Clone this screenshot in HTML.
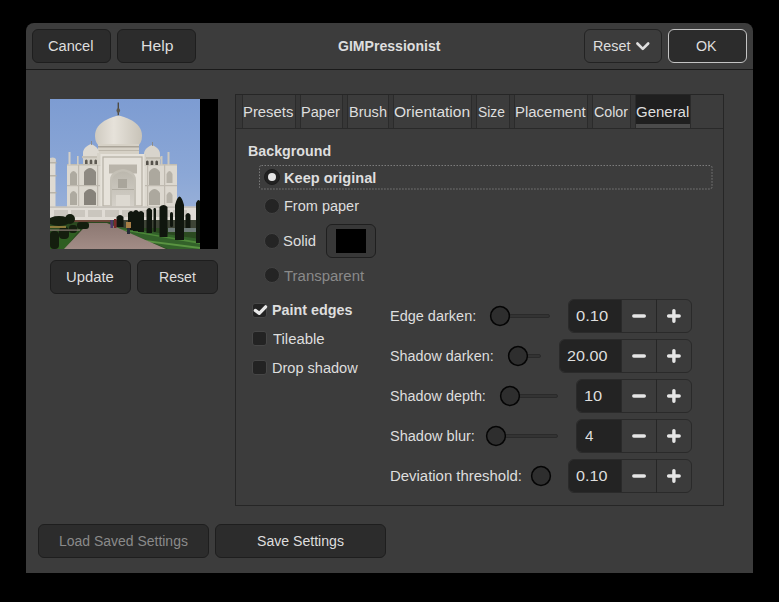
<!DOCTYPE html>
<html><head><meta charset="utf-8">
<style>
*{box-sizing:border-box;margin:0;padding:0}
html,body{width:779px;height:602px;background:#000;overflow:hidden}
body{position:relative;font-family:"Liberation Sans",sans-serif;font-size:15.5px;color:#dedede}
.a{position:absolute}
.win{left:26px;top:23px;width:727px;height:550px;background:#3c3c3c;border-radius:8px 8px 0 0}
.hline{left:26px;top:69px;width:727px;height:1px;background:#1a1a1a}
.t{position:absolute;line-height:20px;white-space:nowrap;transform-origin:0 0}
.b{font-weight:bold}
.btn{position:absolute;background:#2c2c2c;border:1px solid #1e1e1e;border-radius:6px}
.dis{color:#8a8a8a}
.nb{left:235px;top:94px;width:489px;height:412px;border:1px solid #262626}
.tstrip{left:236px;top:95px;width:487px;height:34px;background:#373737}
.tab{position:absolute;top:95px;height:33px;background:#3c3c3c;border-left:1px solid #2b2b2b;border-right:1px solid #2b2b2b}
.radio{position:absolute;width:16px;height:16px;border-radius:50%;background:#242424;border:1px solid #434343}
.chk{position:absolute;width:15px;height:15px;border-radius:3px;background:#232323;border:1px solid #464646}
.knob{position:absolute;width:20px;height:20px;border-radius:50%;background:#2e2e2e;border:1.5px solid #141414}
.track{position:absolute;height:4px;border-radius:2px;background:#333;border:1px solid #2a2a2a}
.spin{position:absolute;height:34px;background:#3b3b3b;border:1px solid #2a2a2a;border-radius:6px;overflow:hidden}
.entry{position:absolute;left:0;top:0;bottom:0;background:#232323;border-right:1px solid #2a2a2a}
.sep{position:absolute;top:0;bottom:0;width:1px;background:#262626}
</style></head><body>
<div class="a win"></div>
<div class="a hline"></div>

<!-- header buttons -->
<div class="btn" style="left:32px;top:29px;width:79px;height:34px"></div>
<div class="t" style="transform:scaleX(0.943);left:48.3px;top:36px">Cancel</div>
<div class="btn" style="left:117px;top:29px;width:79px;height:34px"></div>
<div class="t" style="transform:scaleX(1.017);left:140.5px;top:36px">Help</div>
<div class="t b" style="transform:scaleX(0.908);left:338.1px;top:36px">GIMPressionist</div>
<div class="btn" style="left:584px;top:29px;width:78px;height:34px;background:#3c3c3c;border-color:#232323"></div>
<div class="t" style="transform:scaleX(0.924);left:593.2px;top:36px">Reset</div>
<svg class="a" style="left:634px;top:39px" width="18" height="14" viewBox="0 0 18 14"><polyline points="3.4,4.5 8.8,9.9 14.2,4.5" fill="none" stroke="#dedede" stroke-width="2.6" stroke-linecap="round" stroke-linejoin="round"/></svg>
<div class="btn" style="left:668px;top:29px;width:79px;height:34px;border-color:#c4c4c4"></div>
<div class="t" style="transform:scaleX(0.920);left:696.3px;top:36px">OK</div>

<!-- preview -->
<div class="a" style="left:50px;top:99px;width:168px;height:150px;background:#000"></div>
<svg class="a" style="left:50px;top:99px" width="150" height="150" viewBox="0 0 150 150"><defs>
<linearGradient id="sky" x1="0" y1="0" x2="0" y2="1">
<stop offset="0" stop-color="#7d9cd2"/><stop offset="0.5" stop-color="#8ba7d6"/><stop offset="0.75" stop-color="#98b0d8"/><stop offset="1" stop-color="#a6b8da"/>
</linearGradient>
<linearGradient id="dome" x1="0" y1="0" x2="1" y2="0">
<stop offset="0" stop-color="#cfcac0"/><stop offset="0.4" stop-color="#e6e2da"/><stop offset="1" stop-color="#c8c3b8"/>
</linearGradient>
<linearGradient id="arch" x1="0" y1="0" x2="0" y2="1"><stop offset="0" stop-color="#bcb8ae"/><stop offset="1" stop-color="#d4d0c8"/></linearGradient>
<linearGradient id="path" x1="0" y1="0" x2="0" y2="1">
<stop offset="0" stop-color="#8c7872"/><stop offset="1" stop-color="#a28c86"/>
</linearGradient>
</defs>
<rect width="150" height="150" fill="url(#sky)"/>
<!-- left minaret -->
<rect x="0" y="62" width="5.5" height="46" fill="#dedad2"/>
<ellipse cx="2.5" cy="61" rx="3.5" ry="2.5" fill="#d4d0c8"/>
<rect x="0" y="63" width="6.5" height="1.5" fill="#b8b3a8"/>
<rect x="0" y="76" width="6.5" height="1.5" fill="#b8b3a8"/>
<rect x="0" y="93" width="6.5" height="1.5" fill="#b8b3a8"/>
<!-- spire -->
<rect x="67.6" y="3.5" width="1.4" height="13" fill="#4e4a40"/>
<ellipse cx="68.3" cy="11.5" rx="1.8" ry="2.2" fill="#5e584c"/>
<!-- main dome -->
<path d="M68.4 16.5 C64 17.5 45 22 45 37 C45 42 47 45 49 47 L88 47 C90 45 92 42 92 37 C92 22 73 17.5 68.4 16.5 Z" fill="url(#dome)"/>
<rect x="48" y="45" width="41" height="11" fill="#d6d1c6"/>
<rect x="48" y="47" width="41" height="1.5" fill="#aaa498"/>
<rect x="48" y="51" width="41" height="1" fill="#bdb7ab"/>
<!-- wings -->
<rect x="17" y="65" width="110" height="43" fill="#dcd8cf"/>
<rect x="17" y="65" width="110" height="1.5" fill="#c2bdb2"/>
<!-- chattris -->
<path d="M41 45 C36 47 33 50 33 54 L33 57 L49 57 L49 54 C49 50 46 47 41 45 Z" fill="#dedad2"/>
<rect x="41" y="42" width="0.8" height="4" fill="#8a857a"/>
<rect x="32" y="57" width="18" height="2.2" fill="#c6c1b6"/>
<rect x="33" y="59" width="16" height="6" fill="#d4d0c6"/>
<path d="M35 65 v-3.5 q1.3 -1.8 2.6 0 v3.5 Z M39.7 65 v-3.5 q1.3 -1.8 2.6 0 v3.5 Z M44.4 65 v-3.5 q1.3 -1.8 2.6 0 v3.5 Z" fill="#5e5a52"/>
<path d="M102 46 C97 48 94 51 94 55 L94 58 L110 58 L110 55 C110 51 107 48 102 46 Z" fill="#d8d4cc"/>
<rect x="102" y="43" width="0.8" height="4" fill="#8a857a"/>
<rect x="93" y="58" width="18" height="2.2" fill="#c2bdb2"/>
<rect x="94" y="60" width="16" height="6" fill="#d0ccc2"/>
<path d="M96 66 v-3.5 q1.3 -1.8 2.6 0 v3.5 Z M100.7 66 v-3.5 q1.3 -1.8 2.6 0 v3.5 Z M105.4 66 v-3.5 q1.3 -1.8 2.6 0 v3.5 Z" fill="#55514a"/>
<!-- pinnacles -->
<rect x="18.5" y="53" width="2" height="13" fill="#d4d0c8"/>
<rect x="117.5" y="53" width="2" height="13" fill="#ccc8be"/>
<rect x="110.5" y="57" width="2" height="9" fill="#ccc8be"/>
<rect x="27" y="57" width="1.6" height="9" fill="#d0ccc2"/>
<rect x="47" y="54" width="5" height="12" fill="#d6d2c8"/><rect x="93" y="55" width="3" height="11" fill="#d2cec4"/>
<!-- center pishtaq -->
<rect x="50.5" y="55" width="44" height="53" fill="#e6e2da"/>
<rect x="53" y="58" width="39" height="49" fill="none" stroke="#b4afa4" stroke-width="1.2"/>
<rect x="59" y="65.5" width="28" height="9" fill="#b9b4aa"/>
<path d="M60 107 L60 81 C60 74 66 71 73 70 C80 71 86 74 86 81 L86 107 Z" fill="#c4c0b6"/>
<path d="M62 107 L62 82 C62 76 67.5 73 73 72.5 C78.5 73 84 76 84 82 L84 107 Z" fill="url(#arch)"/>
<rect x="68" y="80" width="9" height="9" fill="#a9a59b"/>
<rect x="62" y="90" width="22" height="1" fill="#b0aca2"/>
<rect x="66" y="96" width="14" height="11" fill="#ddd9d1"/>
<!-- wing pillars/lines -->
<rect x="28" y="66" width="1.2" height="41" fill="#bfbab0"/>
<rect x="47" y="66" width="1.2" height="41" fill="#bfbab0"/>
<rect x="97" y="66" width="1.2" height="41" fill="#bfbab0"/>
<rect x="114" y="66" width="1.2" height="41" fill="#bfbab0"/>
<rect x="17" y="86" width="33" height="1.2" fill="#bfbab0"/>
<rect x="95" y="86" width="32" height="1.2" fill="#bfbab0"/>
<!-- niches left -->
<path d="M34 86 L34 73 Q40 65 46 73 L46 86 Z" fill="#8e8a82"/>
<path d="M34 106 L34 94 Q40 86 46 94 L46 106 Z" fill="#86827a"/>
<path d="M20 86 L20 75 Q23.5 69 27 75 L27 86 Z" fill="#aeaaa0"/>
<path d="M20 106 L20 95 Q23.5 89 27 95 L27 106 Z" fill="#aeaaa0"/>
<!-- niches right -->
<path d="M99 86 L99 73 Q104.5 65 110 73 L110 86 Z" fill="#aca89e"/>
<path d="M99 106 L99 94 Q104.5 86 110 94 L110 106 Z" fill="#aca89e"/>
<path d="M116.5 84 L116.5 75 Q119.5 69 122.5 75 L122.5 84 Z" fill="#b6b2a8"/>
<path d="M116.5 104 L116.5 96 Q119.5 90 122.5 96 L122.5 104 Z" fill="#b6b2a8"/>
<!-- plinth -->
<rect x="0" y="107.5" width="148" height="13.5" fill="#e0dcd5"/>
<rect x="0" y="107.5" width="148" height="1.2" fill="#bcb8b0"/>
<g fill="#cac6be">
<rect x="4" y="111" width="14" height="7"/><rect x="21" y="111" width="14" height="7"/><rect x="38" y="111" width="14" height="7"/><rect x="55" y="111" width="14" height="7"/><rect x="72" y="111" width="14" height="7"/><rect x="89" y="111" width="14" height="7"/><rect x="106" y="111" width="14" height="7"/><rect x="123" y="111" width="14" height="7"/>
</g>
<rect x="0" y="121" width="150" height="2.5" fill="#6a4638"/>
<!-- ground -->
<rect x="0" y="123" width="150" height="27" fill="#2b4a20"/>
<rect x="60" y="121" width="90" height="8" fill="#3e4436"/>
<path d="M0 140 L30 130 L15 150 L0 150 Z" fill="#2f5e22"/>
<path d="M15 150 L30 134 L40 134 L22 150 Z" fill="#3d7a2c"/>
<path d="M62 127 L150 140 L150 150 L118 150 Z" fill="#33622a"/>
<path d="M70 130 L150 143 L150 145 L74 131.5 Z" fill="#4f8a3a"/>
<path d="M95 141 L150 148 L150 150 L100 143.5 Z" fill="#5a9442"/>
<rect x="118" y="129" width="28" height="4" fill="#6e7a78"/>
<!-- path -->
<path d="M38.5 124 L57 124 L116 150 L14 150 Z" fill="url(#path)"/>
<!-- left hedges -->
<g fill="#141e0e">
<ellipse cx="9" cy="122" rx="11" ry="5"/>
<ellipse cx="20" cy="120" rx="5" ry="5"/>
<rect x="0" y="132" width="9" height="18" rx="4"/>
<rect x="9" y="128" width="10" height="12" rx="4"/>
<rect x="19" y="126" width="8" height="8" rx="3"/>
<rect x="27" y="123" width="12" height="7" rx="3"/>
</g>
<rect x="0" y="127" width="16" height="2" fill="#8a7a3a"/>
<rect x="0" y="130.5" width="30" height="1.2" fill="#8a7c74"/>
<!-- cypress trees -->
<g fill="#10160e">
<path d="M66.5 128 L66.5 118 Q70 114 73.5 118 L73.5 128 Z"/>
<path d="M78 131 L78 114 Q81 110 84 114 L84 131 Z"/>
<path d="M83 132 L83 113 Q86 109 89 113 L89 132 Z"/>
<path d="M88 133 L88 114 Q91 110 94 114 L94 133 Z"/>
<path d="M96.5 134 L96.5 111 Q99 107 102 111 L102 134 Z"/>
<rect x="103.5" y="109" width="2.5" height="24" rx="1.2"/>
<path d="M109.5 138 L109.5 108 Q113.5 104 117.5 108 L117.5 138 Z"/>
<rect x="120" y="113" width="3" height="15" rx="1.5"/>
<path d="M125 141 L125 106 Q127 98 129.5 97.5 Q132 98 134 106 L134 141 Z"/>
<path d="M135.5 129 L135.5 116 Q138 112 140.5 116 L140.5 129 Z"/>
<path d="M146 144 L146 104 Q148 99 150 102 L150 144 Z"/>
</g>
<!-- people -->
<rect x="76" y="123" width="5" height="6" fill="#a87e46"/>
<rect x="77" y="129" width="3" height="6" fill="#262c38"/>
<rect x="60.5" y="121" width="2.5" height="8" fill="#4e3a6a"/>
<rect x="64" y="120" width="2.5" height="9" fill="#7a2a2a"/>
</svg>
<div class="btn" style="left:50px;top:260px;width:81px;height:34px"></div>
<div class="t" style="transform:scaleX(0.956);left:66.0px;top:267px">Update</div>
<div class="btn" style="left:137px;top:260px;width:81px;height:34px"></div>
<div class="t" style="transform:scaleX(0.911);left:158.6px;top:267px">Reset</div>

<!-- notebook -->
<div class="a nb"></div>
<div class="a tstrip"></div>
<div class="tab" style="left:242px;width:54px"></div>
<div class="tab" style="left:300px;width:43px"></div>
<div class="tab" style="left:347px;width:42px"></div>
<div class="tab" style="left:393px;width:79px"></div>
<div class="tab" style="left:476px;width:34px"></div>
<div class="tab" style="left:514px;width:74px"></div>
<div class="tab" style="left:592px;width:39px"></div>
<div class="tab" style="left:635px;width:56px;background:#1f1f1f;border-color:#2b2b2b"></div>
<div class="a" style="left:636px;top:124px;width:54px;height:4px;background:#4b4b4b"></div>
<div class="a" style="left:691px;top:95px;width:32px;height:33px;background:#3c3c3c"></div>
<div class="a" style="left:236px;top:128px;width:487px;height:1px;background:#292929"></div>
<div class="t" style="transform:scaleX(0.958);left:243.0px;top:102px">Presets</div>
<div class="t" style="transform:scaleX(0.940);left:301.2px;top:102px">Paper</div>
<div class="t" style="transform:scaleX(0.938);left:349.1px;top:102px">Brush</div>
<div class="t" style="transform:scaleX(1.004);left:394.4px;top:102px">Orientation</div>
<div class="t" style="transform:scaleX(0.891);left:478.0px;top:102px">Size</div>
<div class="t" style="transform:scaleX(0.964);left:514.7px;top:102px">Placement</div>
<div class="t" style="transform:scaleX(0.918);left:593.5px;top:102px">Color</div>
<div class="t" style="transform:scaleX(0.966);left:636.0px;top:102px">General</div>

<!-- background group -->
<div class="t b" style="transform:scaleX(0.919);left:247.9px;top:141px">Background</div>
<svg class="a" style="left:259px;top:165px" width="454" height="25"><rect x="0.5" y="0.5" width="452.5" height="23.5" rx="2" fill="none" stroke="#7c7c7c" stroke-width="1" stroke-dasharray="1.5 1.5"/></svg>
<div class="radio" style="left:264px;top:169px;background:#222;border-color:#1c1c1c"></div>
<div class="a" style="left:268px;top:173px;width:8px;height:8px;border-radius:50%;background:#e4e4e4"></div>
<div class="t b" style="transform:scaleX(0.940);left:283.5px;top:168px">Keep original</div>
<div class="radio" style="left:264px;top:198px"></div>
<div class="t" style="transform:scaleX(0.936);left:283.8px;top:196px">From paper</div>
<div class="radio" style="left:264px;top:232.5px"></div>
<div class="t" style="transform:scaleX(0.957);left:282.7px;top:231px">Solid</div>
<div class="a" style="left:326px;top:224px;width:50px;height:34px;border:1px solid #1f1f1f;border-radius:6px;background:#383838"></div>
<div class="a" style="left:336px;top:229px;width:30px;height:24px;background:#000"></div>
<div class="radio" style="left:264px;top:267px"></div>
<div class="t dis" style="transform:scaleX(0.966);left:284.1px;top:266px">Transparent</div>

<!-- checkboxes -->
<div class="chk" style="left:252px;top:303px"></div>
<svg class="a" style="left:252.5px;top:303px" width="15" height="15" viewBox="0 0 15 15"><polyline points="2.3,7.4 6.3,10.4 12.6,3.8" fill="none" stroke="#e8e8e8" stroke-width="3.2" stroke-linecap="round" stroke-linejoin="round"/></svg>
<div class="t b" style="transform:scaleX(0.925);left:271.9px;top:300px">Paint edges</div>
<div class="chk" style="left:252px;top:331px"></div>
<div class="t" style="transform:scaleX(0.961);left:272.8px;top:329px">Tileable</div>
<div class="chk" style="left:252px;top:360px"></div>
<div class="t" style="transform:scaleX(0.938);left:271.9px;top:358px">Drop shadow</div>

<!-- sliders -->
<div class="t" style="transform:scaleX(0.935);left:390.0px;top:306px">Edge darken:</div>
<div class="track" style="left:500px;top:314px;width:50px"></div>
<svg class="a" style="left:489px;top:305px" width="22" height="22"><circle cx="11" cy="11" r="9.4" fill="#2e2e2e" stroke="#050505" stroke-width="1.5"/></svg>
<div class="t" style="transform:scaleX(0.926);left:390.0px;top:346px">Shadow darken:</div>
<div class="track" style="left:518px;top:354px;width:23px"></div>
<svg class="a" style="left:507px;top:345px" width="22" height="22"><circle cx="11" cy="11" r="9.4" fill="#2e2e2e" stroke="#050505" stroke-width="1.5"/></svg>
<div class="t" style="transform:scaleX(0.927);left:390.0px;top:386px">Shadow depth:</div>
<div class="track" style="left:510px;top:394px;width:48px"></div>
<svg class="a" style="left:499px;top:385px" width="22" height="22"><circle cx="11" cy="11" r="9.4" fill="#2e2e2e" stroke="#050505" stroke-width="1.5"/></svg>
<div class="t" style="transform:scaleX(0.938);left:390.0px;top:426px">Shadow blur:</div>
<div class="track" style="left:496px;top:434px;width:62px"></div>
<svg class="a" style="left:485px;top:425px" width="22" height="22"><circle cx="11" cy="11" r="9.4" fill="#2e2e2e" stroke="#050505" stroke-width="1.5"/></svg>
<div class="t" style="transform:scaleX(0.963);left:390.0px;top:466px">Deviation threshold:</div>
<svg class="a" style="left:530px;top:465px" width="22" height="22"><circle cx="11" cy="11" r="9.4" fill="#2e2e2e" stroke="#050505" stroke-width="1.5"/></svg>

<!-- spins -->
<div class="spin" style="left:568px;top:299px;width:124px"><div class="entry" style="width:53px"></div></div>
<div class="spin" style="left:559px;top:339px;width:133px"><div class="entry" style="width:62px"></div></div>
<div class="spin" style="left:576px;top:379px;width:116px"><div class="entry" style="width:45px"></div></div>
<div class="spin" style="left:576px;top:419px;width:116px"><div class="entry" style="width:45px"></div></div>
<div class="spin" style="left:568px;top:459px;width:124px"><div class="entry" style="width:53px"></div></div>
<div class="t" style="transform:scaleX(1.066);left:576.0px;top:306px">0.10</div>
<div class="t" style="transform:scaleX(1.041);left:567.4px;top:346px">20.00</div>
<div class="t" style="transform:scaleX(1.057);left:583.9px;top:386px">10</div>
<div class="t" style="transform:scaleX(0.979);left:584.9px;top:426px">4</div>
<div class="t" style="transform:scaleX(1.041);left:576.0px;top:466px">0.10</div>
<div class="a" style="left:656px;top:299px;width:1px;height:34px;background:#262626"></div>
<div class="a" style="left:656px;top:339px;width:1px;height:34px;background:#262626"></div>
<div class="a" style="left:656px;top:379px;width:1px;height:34px;background:#262626"></div>
<div class="a" style="left:656px;top:419px;width:1px;height:34px;background:#262626"></div>
<div class="a" style="left:656px;top:459px;width:1px;height:34px;background:#262626"></div>
<svg class="a" style="left:621px;top:299px" width="71" height="200" viewBox="0 0 71 200">
<g stroke="#e6e6e6" stroke-width="3.4" stroke-linecap="round" fill="none">
<path d="M12.8 17H23.3M47.6 17H58.2M52.9 11.6V22.2"/>
<path d="M12.8 57H23.3M47.6 57H58.2M52.9 51.6V62.2"/>
<path d="M12.8 97H23.3M47.6 97H58.2M52.9 91.6V102.2"/>
<path d="M12.8 137H23.3M47.6 137H58.2M52.9 131.6V142.2"/>
<path d="M12.8 177H23.3M47.6 177H58.2M52.9 171.6V182.2"/>
</g></svg>

<!-- bottom buttons -->
<div class="btn" style="left:38px;top:524px;width:171px;height:34px"></div>
<div class="t dis" style="transform:scaleX(0.901);left:58.5px;top:531px">Load Saved Settings</div>
<div class="btn" style="left:215px;top:524px;width:171px;height:34px"></div>
<div class="t" style="transform:scaleX(0.909);left:256.9px;top:531px">Save Settings</div>

</body></html>
